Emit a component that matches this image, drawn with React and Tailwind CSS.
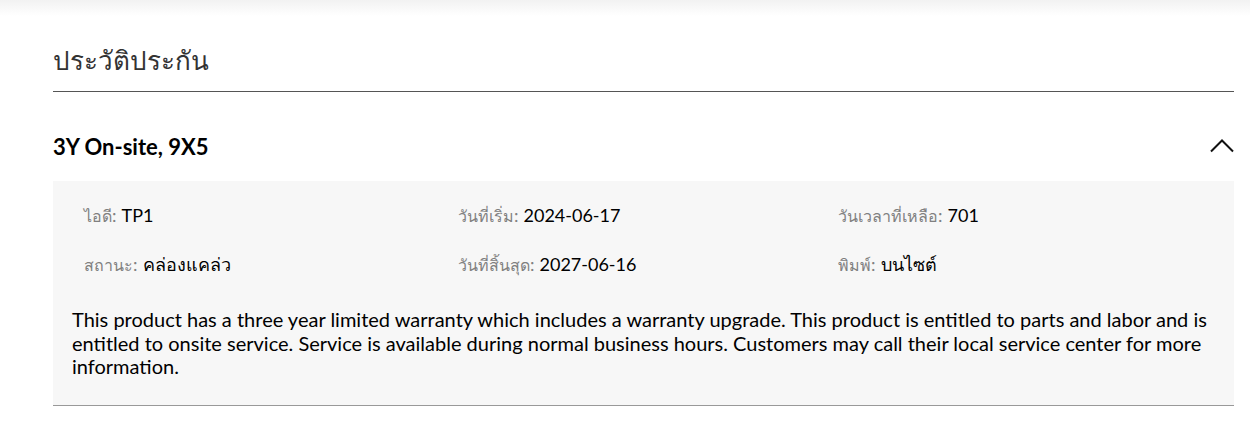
export default function App() {
    const fields = [
        { label: 'ไอดี', value: 'TP1' },
        { label: 'วันที่เริ่ม', value: '2024-06-17' },
        { label: 'วันเวลาที่เหลือ', value: '701' },
        { label: 'สถานะ', value: 'คล่องแคล่ว' },
        { label: 'วันที่สิ้นสุด', value: '2027-06-16' },
        { label: 'พิมพ์', value: 'บนไซต์' },
    ]

    return (
        <div className="min-h-[422px] bg-white font-['Lato','Noto_Sans',sans-serif] text-black">
            {/* top shade */}
            <div className="h-4 bg-gradient-to-b from-[#f2f2f2] to-white" />

            <div className="ml-[53px] mr-[16px]">
                <h2 className="h-[76px] pt-[13px] flex items-center border-b border-[#555] text-[26px] font-medium text-[#333]">
                    ประวัติประกัน
                </h2>

                <div className="h-[89px] pt-[20px] flex items-center justify-between">
                    <h3 className="text-[22px] font-bold">3Y On-site, 9X5</h3>
                    <svg width="24" height="14" viewBox="0 0 24 14" fill="none" className="mt-[-2px]">
                        <polyline points="1,12.5 12,1.5 23,12.5" stroke="#111" strokeWidth="2" />
                    </svg>
                </div>

                <div className="bg-[#f7f7f7] border-b border-[#999] px-[19px] pt-[10px] pb-[26px]">
                    <div className="grid grid-cols-[374px_380px_1fr] pl-[12px]">
                        {fields.map((f) => (
                            <div key={f.label} className="h-[49px] flex items-center text-[18px]">
                                <span className="text-[16px] text-[#808080]">{f.label}</span>
                                <span className="text-[#808080]">:</span>
                                <span className="ml-[5px]">{f.value}</span>
                            </div>
                        ))}
                    </div>
                    <p className="mt-[19px] text-[20px] leading-[23.5px]">
                        This product has a three year limited warranty which includes a warranty upgrade. This product is entitled to parts and labor and is entitled to onsite service. Service is available during normal business hours. Customers may call their local service center for more information.
                    </p>
                </div>
            </div>
        </div>
    )
}
